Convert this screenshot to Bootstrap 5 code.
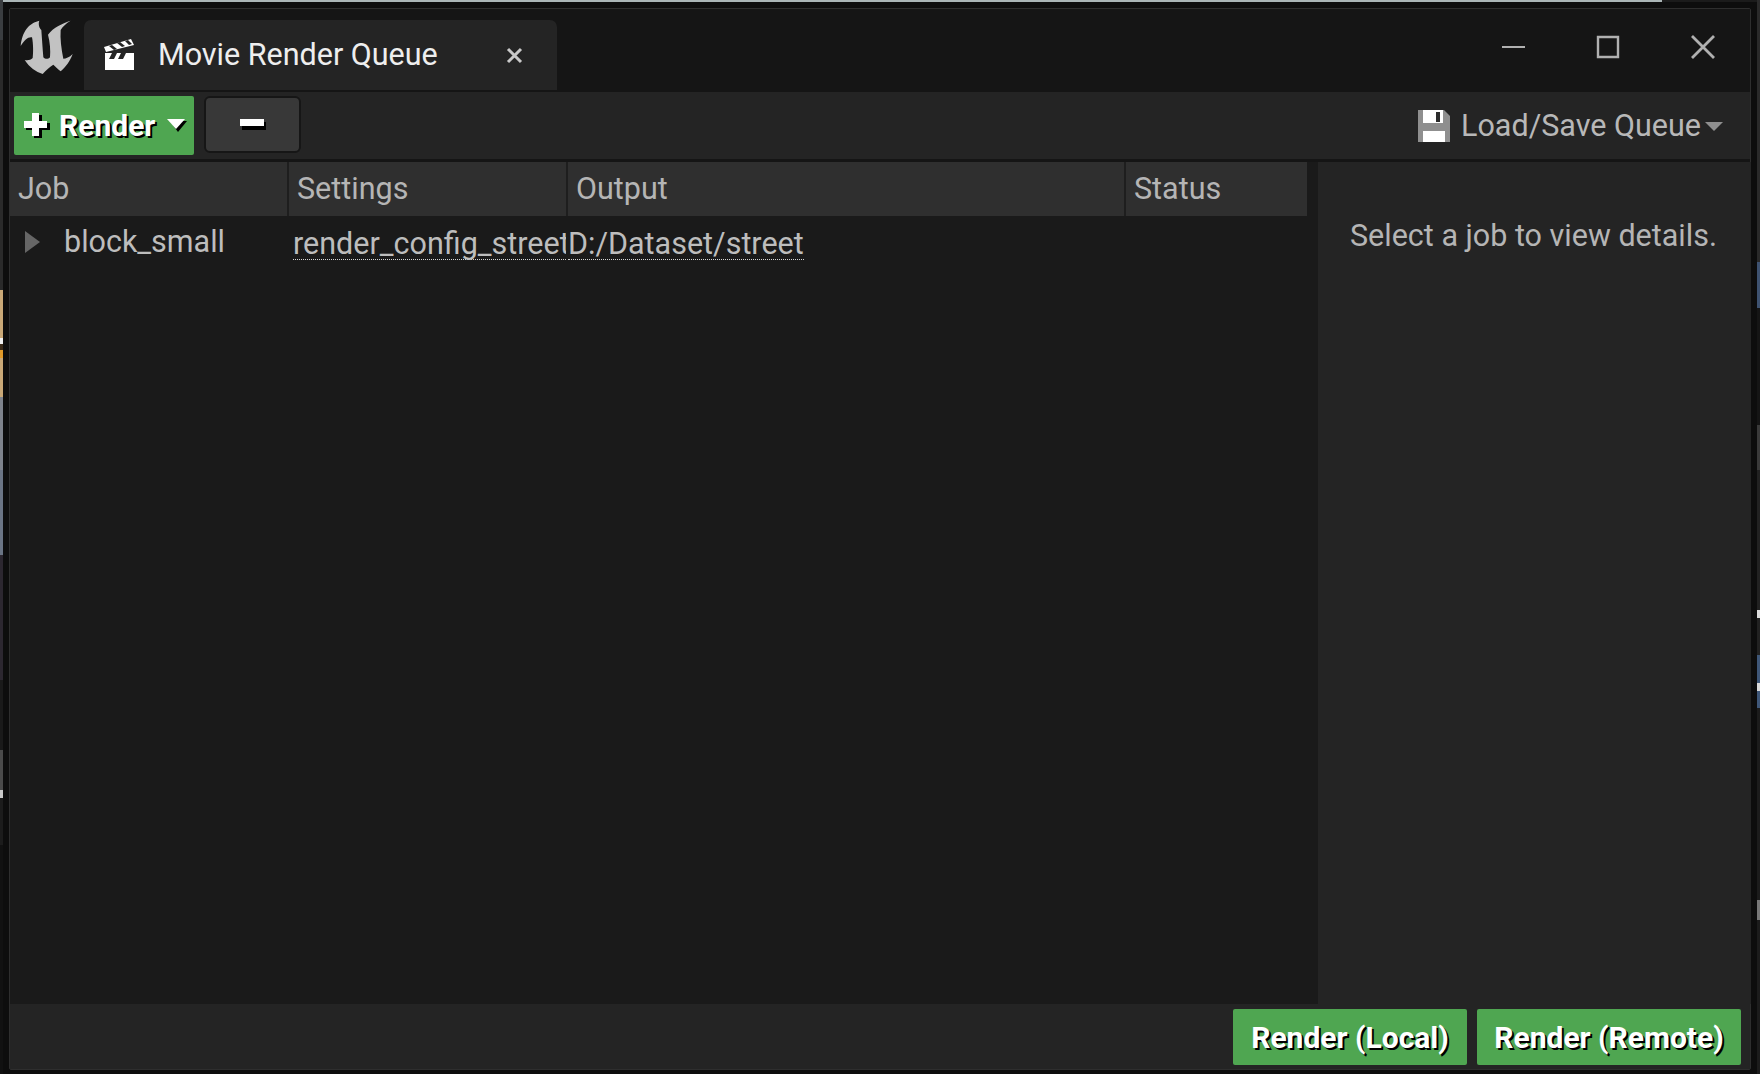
<!DOCTYPE html>
<html lang="en">
<head>
  <meta charset="UTF-8" />
  <title>Movie Render Queue</title>
  <link href="https://cdn.jsdelivr.net/npm/bootstrap@5.3.2/dist/css/bootstrap.min.css" rel="stylesheet"/>
  <style>
    html, body { height: 1074px; overflow: hidden; }
    body {
      background: #0d0d0d;
      font-family: Roboto, sans-serif;
      font-size: 30.5px;
      line-height: 1;
    }
    .desk-top { height: 2px; background: linear-gradient(90deg, #aab5b6 0 1662px, #1b1b1b 1662px); margin-bottom: 6px; }
    .desk-row { height: 1062px; }
    .strip-l, .strip-r { width: 3px; flex: none; margin-top: -8px; height: 1074px; }
    .strip-l {
      background: linear-gradient(180deg, #3a3d40 0 40px, #2a2a2a 40px 290px, #c9a877 290px 338px, #eee 338px 344px, #3a2a18 344px 350px, #e09a2a 350px 358px, #c9a877 358px 397px, #7e838c 397px 470px, #6a7484 470px 555px, #2c2730 555px 680px, #1a1a1a 680px 750px, #4a4a4a 750px 790px, #c8c8c8 790px 798px, #1c1c1c 798px 845px, #111 845px);
    }
    .strip-r {
      background: linear-gradient(180deg, #2a2a2a 0 262px, #3e5270 262px 308px, #151515 308px 425px, #3a3a3a 425px 470px, #222 470px 610px, #d9d9d9 610px 618px, #222 618px 655px, #3f5778 655px 683px, #d9d9d9 683px 691px, #3f5778 691px 708px, #1c1c1c 708px 900px, #777 900px 920px, #1c1c1c 920px);
    }
    .ue-gap-l { width: 6px; flex: none; }
    .ue-gap-r { width: 6px; flex: none; }
    .ue-win { width: 1742px; flex: none; border: 1px solid #2e2e2e; border-radius: 2px; background: #151515; }
    .title-bar { height: 83px; flex: none; background: #151515; }
    .ue-logo { width: 64px; height: 64px; margin: 5px 6px 0 4px; align-self: flex-start; flex: none; }
    .ue-tab { width: 473px; height: 70px; margin-top: 11px; background: #242424; border-radius: 7px 7px 0 0; color: #eee; padding-left: 19px; flex: none; }
    .tab-label { margin-left: 21px; width: 348px; white-space: nowrap; }
    .win-btns { margin-left: auto; padding: 26px 35px 0 0; gap: 71px; align-self: flex-start; }
    .tool-bar { height: 67px; flex: none; background: #242424; padding: 4px 0 3px 4px; margin-bottom: 3px; }
    .go-btn {
      background: #4fa651; color: #fff; border-radius: 2px; font-weight: 700; font-size: 30px;
      text-shadow: 2px 2px 0 #000; border: 0;
    }
    .go-add { width: 180px; height: 59px; padding: 0 0 0 9px; gap: 8px; }
    .go-small { height: 56px; padding: 1px 0 0; justify-content: center; }
    .less-btn { width: 97px; height: 57px; margin-left: 10px; background: #383838; border: 2px solid #161616; border-radius: 6px; }
    .queue-menu { margin-left: auto; padding-right: 27px; gap: 11px; color: #b8b8b8; }
    .caret-tight { margin-left: -7px; }
    .body-wrap { flex: 1 1 0; min-height: 0; background: #1a1a1a; }
    .list-side { width: 1297px; flex: none; }
    .head-row { height: 54px; width: 100%; background: #2f2f2f; color: #b5b5b5; }
    .head-cell { padding-left: 8px; border-right: 2px solid #1e1e1e; flex: none; height: 100%; }
    .c-job { width: 279px; }
    .c-set { width: 279px; }
    .c-out { width: 558px; }
    .c-stat { width: 181px; border-right: 0; }
    .job-row { height: 56px; color: #bdbdbd; }
    .job-name { width: 279px; padding-left: 15px; gap: 24px; flex: none; margin-top: -4px; }
    .job-set { width: 277px; padding-left: 4px; padding-top: 1px; overflow: hidden; white-space: nowrap; flex: none; }
    .dot-line { display: inline-block; border-bottom: 1px dotted #d4d4d4; }
    .job-out { margin-left: 2px; white-space: nowrap; padding-top: 1px; }
    .detail-side { width: 433px; margin-left: 11px; flex: none; background: #242424; color: #b5b5b5; padding: 59px 0 0 32px; }
    .foot-bar { height: 65px; flex: none; background: #242424; padding: 5px 9px 4px 0; gap: 10px; }
    .w-local { width: 234px; }
    .w-remote { width: 264px; }
  </style>
</head>
<body>
  <div class="desk-top"></div>
  <div class="d-flex desk-row">
    <div class="strip-l"></div>
    <div class="ue-gap-l"></div>
    <div class="ue-win d-flex flex-column">

      <div class="title-bar d-flex">
        <svg class="ue-logo" viewBox="0 0 192 192">
          <path fill="#c2c2c2" d="M76 20C52 26 26 42 20 96C32 78 42 68 54 70C58 90 58 116 56 132C50 138 42 140 32 138C46 160 66 174 86 180C96 168 108 158 118 152C124 158 132 166 140 172C154 160 168 142 176 120C166 130 156 134 148 134C142 104 138 74 140 48C146 38 156 28 170 20C146 28 118 40 102 62C108 84 110 110 108 130C102 136 94 136 88 130C86 104 84 76 82 48C76 42 72 30 76 20Z"/>
        </svg>
        <div class="ue-tab d-flex align-items-center">
          <svg width="34" height="34" viewBox="0 0 34 34" class="flex-shrink-0">
            <path fill="#fff" d="M2 15H31V32H2Z"/>
            <path fill="#242424" d="M9 15h5l-3 6H6ZM18 15h5l-3 6h-5Z"/>
            <path fill="#fff" d="M1 9L28 1L31 7L3 14Z"/>
            <path fill="#242424" d="M6 8l5 4 3-1-5-4ZM14 5l5 4 3-1-5-4ZM22 3l4 4 3-1-4-4Z"/>
          </svg>
          <span class="tab-label">Movie Render Queue</span>
          <svg width="17" height="17" viewBox="0 0 17 17" class="flex-shrink-0">
            <path stroke="#c9c9c9" stroke-width="3" d="M2 2L15 15M15 2L2 15"/>
          </svg>
        </div>
        <div class="win-btns d-flex">
          <svg width="24" height="24" viewBox="0 0 24 24"><path stroke="#b0b0b0" stroke-width="2" d="M1 12H24"/></svg>
          <svg width="24" height="24" viewBox="0 0 24 24"><path fill="none" stroke="#b0b0b0" stroke-width="2.4" d="M2 2H22V22H2Z"/></svg>
          <svg width="24" height="24" viewBox="0 0 24 24"><path stroke="#b0b0b0" stroke-width="2.8" d="M1 1L23 23M23 1L1 23"/></svg>
        </div>
      </div>

      <div class="tool-bar d-flex align-items-start">
        <button class="go-btn go-add d-flex align-items-center" type="button">
          <svg width="28" height="28" viewBox="0 0 28 28" class="flex-shrink-0">
            <path fill="#000" d="M11 3h8v8h8v7h-8v8h-8v-8H3v-7h8Z"/>
            <path fill="#fff" d="M9 1h7v8h8v7h-8v8H9v-8H1V9h8Z"/>
          </svg>
          <span>Render</span>
          <svg class="ms-1 flex-shrink-0" width="20" height="13" viewBox="0 0 20 13">
            <path fill="#000" d="M3 2H20L11 13Z"/>
            <path fill="#fff" d="M0 0H18L9 10Z"/>
          </svg>
        </button>
        <div class="less-btn d-flex align-items-center justify-content-center">
          <svg width="26" height="11" viewBox="0 0 26 11">
            <path fill="#000" d="M2 3H26V11H2Z"/>
            <path fill="#fff" d="M0 0H24V7H0Z"/>
          </svg>
        </div>
        <div class="queue-menu d-flex align-items-center align-self-center">
          <svg width="32" height="32" viewBox="0 0 32 32">
            <path fill="#8f8f8f" d="M0 0H26L32 6V32H0Z"/>
            <path fill="#fff" d="M5 0H25V13H5Z"/>
            <path fill="#2c2c2c" d="M18 2H22V12H18Z"/>
            <path fill="#fff" d="M5 21H27V32H5Z"/>
          </svg>
          <span>Load/Save Queue</span>
          <svg class="caret-tight" width="18" height="9" viewBox="0 0 18 9"><path fill="#8f8f8f" d="M0 0H18L9 9Z"/></svg>
        </div>
      </div>

      <div class="body-wrap d-flex">
        <div class="list-side">
          <div class="head-row d-flex">
            <div class="head-cell c-job d-flex align-items-center">Job</div>
            <div class="head-cell c-set d-flex align-items-center">Settings</div>
            <div class="head-cell c-out d-flex align-items-center">Output</div>
            <div class="head-cell c-stat d-flex align-items-center">Status</div>
          </div>
          <div class="job-row d-flex align-items-center">
            <div class="job-name d-flex align-items-center">
              <svg width="15" height="22" viewBox="0 0 15 22"><path fill="#666" d="M0 0L15 11L0 22Z"/></svg>
              <span>block_small</span>
            </div>
            <div class="job-set"><span class="dot-line">render_config_street</span></div>
            <div class="job-out"><span class="dot-line">D:/Dataset/street</span></div>
          </div>
        </div>
        <div class="detail-side">Select a job to view details.</div>
      </div>

      <div class="foot-bar d-flex justify-content-end">
        <button class="go-btn go-small w-local d-flex align-items-center" type="button">Render (Local)</button>
        <button class="go-btn go-small w-remote d-flex align-items-center" type="button">Render (Remote)</button>
      </div>
    </div>
    <div class="ue-gap-r"></div>
    <div class="strip-r"></div>
  </div>
</body>
</html>
